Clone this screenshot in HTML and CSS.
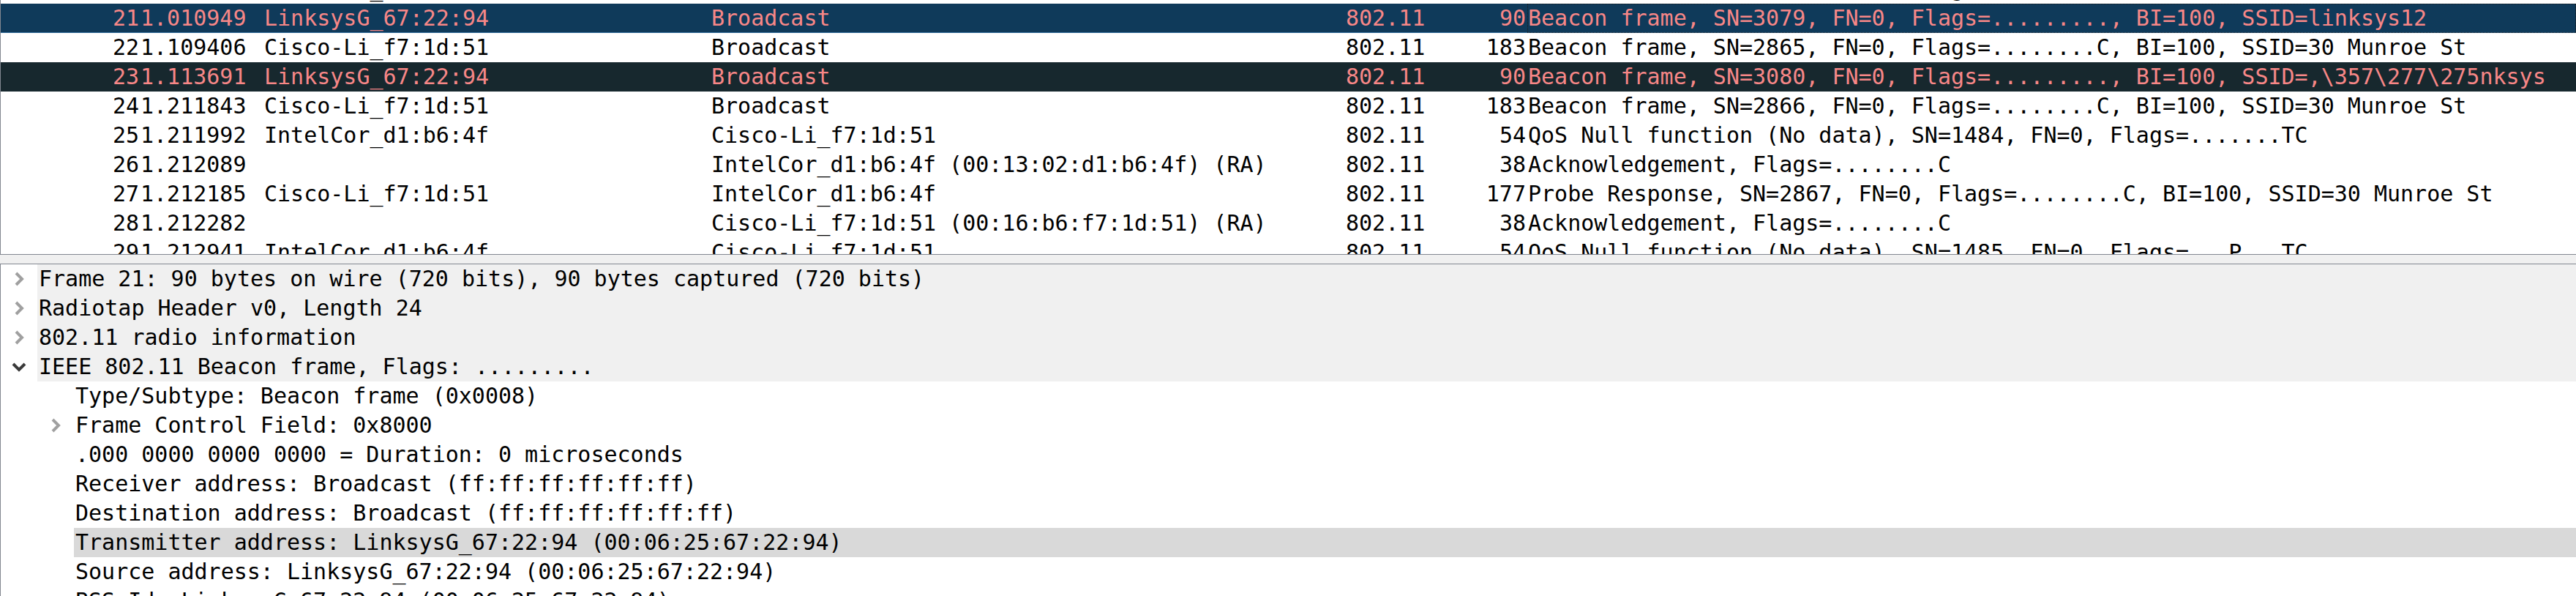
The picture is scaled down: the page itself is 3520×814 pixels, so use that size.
FILE: index.html
```html
<!DOCTYPE html>
<html>
<head>
<meta charset="utf-8">
<link rel="stylesheet" href="styles.css">
</head>
<body>
<div class="plist">
  <div class="plist-rows">
    <div class="prow">
      <span class="c c-no">20</span><span class="c c-time">1.007045</span><span class="c c-src">Cisco-Li_f7:1d:51</span><span class="c c-dst">Broadcast</span><span class="c c-proto">802.11</span><span class="c c-len">183</span><span class="c c-info">Beacon frame, SN=2864, FN=0, Flags=........C, BI=100, SSID=30 Munroe St</span>
    </div>
    <div class="prow sel">
      <span class="c c-no">21</span><span class="c c-time">1.010949</span><span class="c c-src">LinksysG_67:22:94</span><span class="c c-dst">Broadcast</span><span class="c c-proto">802.11</span><span class="c c-len">90</span><span class="c c-info focus">Beacon frame, SN=3079, FN=0, Flags=........., BI=100, SSID=linksys12</span>
    </div>
    <div class="prow">
      <span class="c c-no">22</span><span class="c c-time">1.109406</span><span class="c c-src">Cisco-Li_f7:1d:51</span><span class="c c-dst">Broadcast</span><span class="c c-proto">802.11</span><span class="c c-len">183</span><span class="c c-info">Beacon frame, SN=2865, FN=0, Flags=........C, BI=100, SSID=30 Munroe St</span>
    </div>
    <div class="prow bad">
      <span class="c c-no">23</span><span class="c c-time">1.113691</span><span class="c c-src">LinksysG_67:22:94</span><span class="c c-dst">Broadcast</span><span class="c c-proto">802.11</span><span class="c c-len">90</span><span class="c c-info">Beacon frame, SN=3080, FN=0, Flags=........., BI=100, SSID=,\357\277\275nksys</span>
    </div>
    <div class="prow">
      <span class="c c-no">24</span><span class="c c-time">1.211843</span><span class="c c-src">Cisco-Li_f7:1d:51</span><span class="c c-dst">Broadcast</span><span class="c c-proto">802.11</span><span class="c c-len">183</span><span class="c c-info">Beacon frame, SN=2866, FN=0, Flags=........C, BI=100, SSID=30 Munroe St</span>
    </div>
    <div class="prow">
      <span class="c c-no">25</span><span class="c c-time">1.211992</span><span class="c c-src">IntelCor_d1:b6:4f</span><span class="c c-dst">Cisco-Li_f7:1d:51</span><span class="c c-proto">802.11</span><span class="c c-len">54</span><span class="c c-info">QoS Null function (No data), SN=1484, FN=0, Flags=.......TC</span>
    </div>
    <div class="prow">
      <span class="c c-no">26</span><span class="c c-time">1.212089</span><span class="c c-src"></span><span class="c c-dst">IntelCor_d1:b6:4f (00:13:02:d1:b6:4f) (RA)</span><span class="c c-proto">802.11</span><span class="c c-len">38</span><span class="c c-info">Acknowledgement, Flags=........C</span>
    </div>
    <div class="prow">
      <span class="c c-no">27</span><span class="c c-time">1.212185</span><span class="c c-src">Cisco-Li_f7:1d:51</span><span class="c c-dst">IntelCor_d1:b6:4f</span><span class="c c-proto">802.11</span><span class="c c-len">177</span><span class="c c-info">Probe Response, SN=2867, FN=0, Flags=........C, BI=100, SSID=30 Munroe St</span>
    </div>
    <div class="prow">
      <span class="c c-no">28</span><span class="c c-time">1.212282</span><span class="c c-src"></span><span class="c c-dst">Cisco-Li_f7:1d:51 (00:16:b6:f7:1d:51) (RA)</span><span class="c c-proto">802.11</span><span class="c c-len">38</span><span class="c c-info">Acknowledgement, Flags=........C</span>
    </div>
    <div class="prow">
      <span class="c c-no">29</span><span class="c c-time">1.212941</span><span class="c c-src">IntelCor_d1:b6:4f</span><span class="c c-dst">Cisco-Li_f7:1d:51</span><span class="c c-proto">802.11</span><span class="c c-len">54</span><span class="c c-info">QoS Null function (No data), SN=1485, FN=0, Flags=...P...TC</span>
    </div>
  </div>
</div>
<div class="splitter"></div>
<div class="tree">
  <div class="trow top">
    <span class="branch"><svg class="chev-r" viewBox="0 0 16 24" width="16" height="24"><polyline points="4,4 12,12 4,20" /></svg></span>
    <span class="label">Frame 21: 90 bytes on wire (720 bits), 90 bytes captured (720 bits)</span>
  </div>
  <div class="trow top">
    <span class="branch"><svg class="chev-r" viewBox="0 0 16 24" width="16" height="24"><polyline points="4,4 12,12 4,20" /></svg></span>
    <span class="label">Radiotap Header v0, Length 24</span>
  </div>
  <div class="trow top">
    <span class="branch"><svg class="chev-r" viewBox="0 0 16 24" width="16" height="24"><polyline points="4,4 12,12 4,20" /></svg></span>
    <span class="label">802.11 radio information</span>
  </div>
  <div class="trow top">
    <span class="branch"><svg class="chev-d" viewBox="0 0 24 16" width="24" height="16"><polyline points="4,4 12,12 20,4" /></svg></span>
    <span class="label">IEEE 802.11 Beacon frame, Flags: .........</span>
  </div>
  <div class="trow">
    <span class="indent"></span><span class="branch"></span>
    <span class="label">Type/Subtype: Beacon frame (0x0008)</span>
  </div>
  <div class="trow">
    <span class="indent"></span>
    <span class="branch"><svg class="chev-r" viewBox="0 0 16 24" width="16" height="24"><polyline points="4,4 12,12 4,20" /></svg></span>
    <span class="label">Frame Control Field: 0x8000</span>
  </div>
  <div class="trow">
    <span class="indent"></span><span class="branch"></span>
    <span class="label">.000 0000 0000 0000 = Duration: 0 microseconds</span>
  </div>
  <div class="trow">
    <span class="indent"></span><span class="branch"></span>
    <span class="label">Receiver address: Broadcast (ff:ff:ff:ff:ff:ff)</span>
  </div>
  <div class="trow">
    <span class="indent"></span><span class="branch"></span>
    <span class="label">Destination address: Broadcast (ff:ff:ff:ff:ff:ff)</span>
  </div>
  <div class="trow hl">
    <span class="indent"></span><span class="branch"></span>
    <span class="label">Transmitter address: LinksysG_67:22:94 (00:06:25:67:22:94)</span>
  </div>
  <div class="trow">
    <span class="indent"></span><span class="branch"></span>
    <span class="label">Source address: LinksysG_67:22:94 (00:06:25:67:22:94)</span>
  </div>
  <div class="trow">
    <span class="indent"></span><span class="branch"></span>
    <span class="label">BSS Id: LinksysG_67:22:94 (00:06:25:67:22:94)</span>
  </div>
</div>
</body>
</html>
```

FILE: styles.css
```css
html, body {
  margin: 0;
  padding: 0;
}
body {
  width: 3520px;
  height: 814px;
  overflow: hidden;
  background: #f0f0f0;
  font-family: "DejaVu Sans Mono", "Liberation Mono", monospace;
  font-size: 30px;
  color: #000;
}

/* packet list */
.plist {
  height: 347px;
  overflow: hidden;
  background: #fff;
  border-left: 1px solid #828790;
  border-bottom: 1px solid #828790;
}
.plist-rows {
  margin-top: -35px;
}
.prow {
  display: flex;
  height: 40px;
  line-height: 40px;
  white-space: nowrap;
}
.prow.sel {
  background: #0f3a5a;
  color: #f78787;
  box-shadow: inset 0 -1px 0 #2d6896;
}
.prow.bad {
  background: #17282e;
  color: #f78787;
}
.c {
  display: block;
  flex: none;
  box-sizing: border-box;
  overflow: hidden;
}
.c-no { width: 189px; text-align: right; }
.c-time { width: 171px; padding-left: 2px; }
.c-src { width: 611px; }
.c-dst { width: 867px; }
.c-proto { width: 161px; }
.c-len { width: 87px; text-align: right; padding-right: 2px; }
.c-info {
  flex: 1;
  border: 1px dotted transparent;
  line-height: 38px;
}
.c-info.focus {
  border-color: #1a1a1a;
}

.splitter {
  height: 12px;
}

/* details tree */
.tree {
  height: 453px;
  overflow: hidden;
  background: #fff;
  border-left: 1px solid #828790;
  border-top: 1px solid #828790;
}
.trow {
  display: flex;
  height: 40px;
  line-height: 40px;
  white-space: nowrap;
}
.indent {
  width: 50px;
  flex: none;
}
.branch {
  width: 50px;
  flex: none;
  display: flex;
  align-items: center;
  justify-content: center;
}
.label {
  flex: 1;
  padding-left: 2px;
}
.trow.top .label {
  background: #f0f0f0;
}
.trow.hl .label {
  background: #d9d9d9;
}
.chev-r polyline {
  fill: none;
  stroke: #a0a0a0;
  stroke-width: 4;
}
.chev-d polyline {
  fill: none;
  stroke: #3a3a3a;
  stroke-width: 4;
}
```
